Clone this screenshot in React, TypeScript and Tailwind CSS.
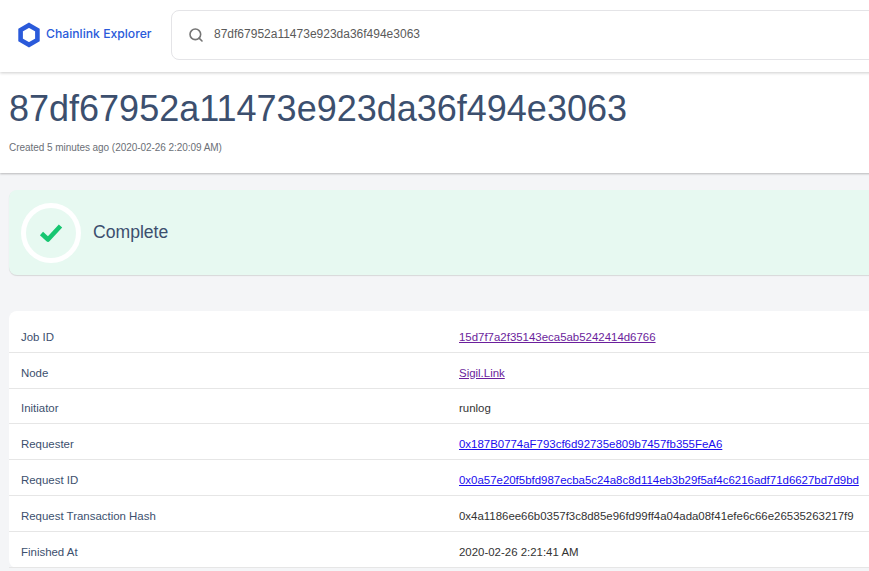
import React from "react";
import { Search } from "lucide-react";

const rows = [
  { label: "Job ID", value: "15d7f7a2f35143eca5ab5242414d6766", link: "visited" },
  { label: "Node", value: "Sigil.Link", link: "visited" },
  { label: "Initiator", value: "runlog" },
  { label: "Requester", value: "0x187B0774aF793cf6d92735e809b7457fb355FeA6", link: "new" },
  { label: "Request ID", value: "0x0a57e20f5bfd987ecba5c24a8c8d114eb3b29f5af4c6216adf71d6627bd7d9bd", link: "new" },
  { label: "Request Transaction Hash", value: "0x4a1186ee66b0357f3c8d85e96fd99ff4a04ada08f41efe6c66e26535263217f9" },
  { label: "Finished At", value: "2020-02-26 2:21:41 AM" },
];

const Logo = () => (
  <svg width="24" height="26" viewBox="0 0 24 26" className="shrink-0">
    <path d="M12 3.2 L20.4 8 V18 L12 22.8 L3.6 18 V8 Z" fill="none" stroke="#2a5ada" strokeWidth="4.6" />
  </svg>
);

export default function App() {
  return (
    <div className="h-[571px] w-[869px] overflow-hidden bg-[#f4f5f7] font-['Liberation_Sans',sans-serif]">
      <div className="w-[1000px]">
        {/* Top bar */}
        <div className="relative z-10 flex h-[72px] items-center bg-white pb-[3px] pl-[17px] shadow-[0_1px_3px_rgba(0,0,0,0.2)]">
          <Logo />
          <span className="ml-[5px] w-[125px] font-['Inter',sans-serif] text-[12.2px] font-medium whitespace-nowrap text-[#2a5ada]">
            Chainlink Explorer
          </span>
          <div className="flex h-[50px] flex-1 items-center rounded-l-[8px] border border-[#e4e4e7] pl-[16px]">
            <Search size={16} strokeWidth={2.4} className="text-[#757575]" />
            <span className="mb-[1px] ml-[10px] text-[12px] text-[#5a5a5a]">87df67952a11473e923da36f494e3063</span>
          </div>
        </div>

        {/* Title */}
        <div className="h-[101px] bg-white pt-[14px] pl-[9px] shadow-[0_1px_2px_rgba(0,0,0,0.25)]">
          <h1 className="text-[36px] leading-[46px] whitespace-nowrap text-[#3c4f6e]">87df67952a11473e923da36f494e3063</h1>
          <p className="mt-[8px] text-[10px] tracking-[-0.05px] text-[#6b6f76]">Created 5 minutes ago (2020-02-26 2:20:09 AM)</p>
        </div>

        {/* Status */}
        <div className="mt-[17px] ml-[9px] flex h-[85px] items-center rounded-l-[8px] bg-[#e7f9f1] pl-[12px] shadow-[0_1px_1px_rgba(0,0,0,0.12)]">
          <div className="flex h-[60px] w-[60px] items-center justify-center rounded-full border-[5px] border-white">
            <svg width="24" height="20" viewBox="0 0 24 20">
              <path d="M2.5 10.5 L9 16.5 L21.5 3" fill="none" stroke="#17c671" strokeWidth="4.6" strokeLinejoin="round" />
            </svg>
          </div>
          <span className="ml-[12px] text-[17.6px] text-[#3c4f6e]">Complete</span>
        </div>

        {/* Details */}
        <div className="mt-[36px] ml-[9px] rounded-l-[8px] bg-white pt-[6px]">
          {rows.map((row) => (
            <div key={row.label} className="flex h-[35.8px] items-center border-b border-[#e6e6e6] pt-[6px] pl-[12px] text-[11.45px]">
              <span className="w-[438px] shrink-0 text-[#3c4f6e]">{row.label}</span>
              {row.link ? (
                <a
                  href="#"
                  className={row.link === "visited" ? "whitespace-nowrap text-[#6b1e9c] underline" : "whitespace-nowrap text-[#1a0dee] underline"}
                >
                  {row.value}
                </a>
              ) : (
                <span className="whitespace-nowrap text-[#333]">{row.value}</span>
              )}
            </div>
          ))}
        </div>
      </div>
    </div>
  );
}
